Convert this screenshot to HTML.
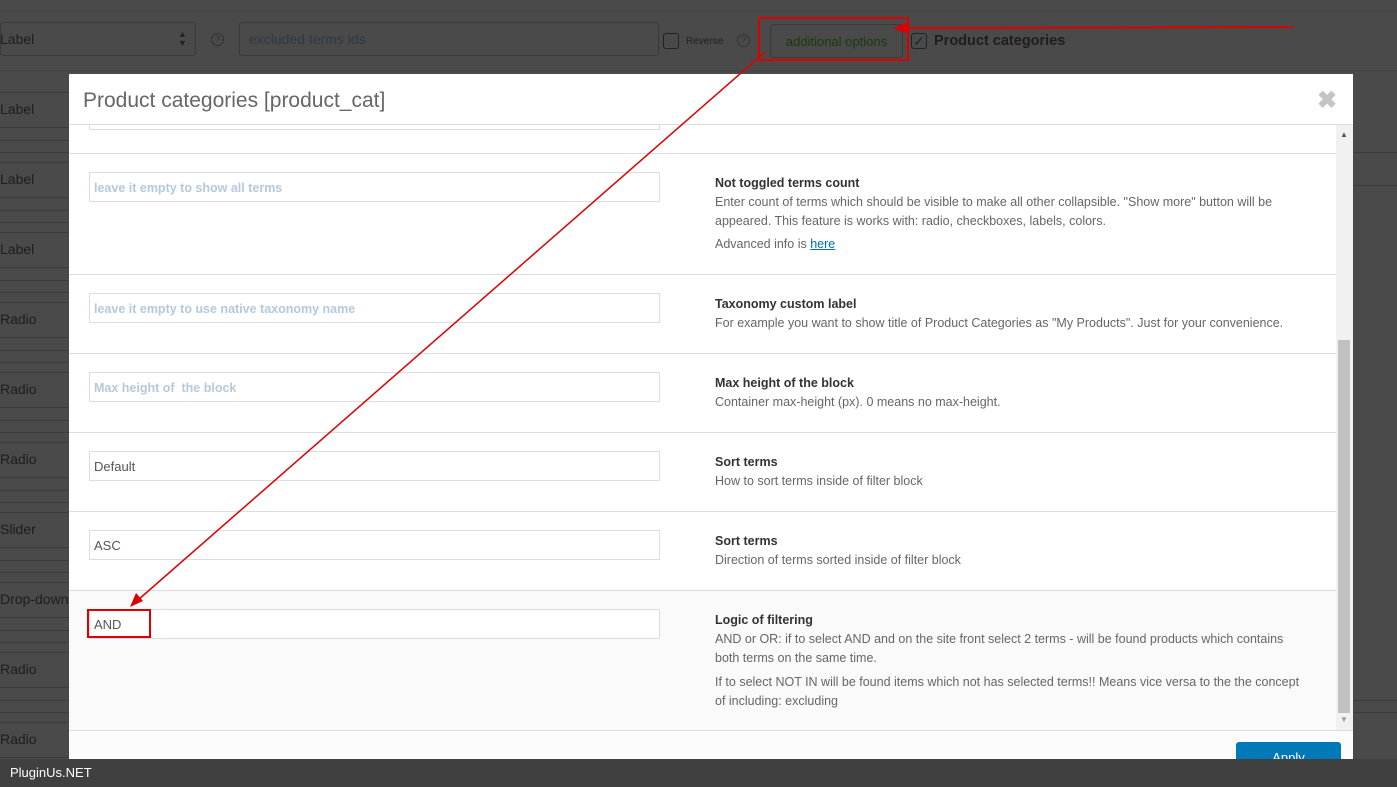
<!DOCTYPE html>
<html><head><meta charset="utf-8"><style>
*{box-sizing:border-box;margin:0;padding:0}
html,body{width:1397px;height:787px;overflow:hidden}
body{font-family:"Liberation Sans",sans-serif;position:relative;background:rgb(74,74,74)}
.abs{position:absolute}
.bgl{position:absolute;left:0;width:69px;height:1px;background:#3c3c3c}
.bgt{position:absolute;left:0;font-size:14px;color:#1e1e1e}
.modal{position:absolute;left:69px;top:74px;width:1284px;height:685px;background:#fff}
.hd{position:absolute;left:0;top:0;width:1284px;height:51px;border-bottom:1px solid #ddd}
.hd h1{position:absolute;left:14px;top:15px;font-weight:normal;font-size:21px;color:#666;white-space:nowrap}
.row{position:absolute;left:0;width:1267px;border-bottom:1px solid #ddd}
.inp{position:absolute;left:20px;width:571px;height:30px;border:1px solid #ddd;background:#fff;font-size:13px;color:#555;padding:7px 4px}
.ph{color:#b5c9de;font-weight:bold;font-size:12.5px}
.ds{position:absolute;left:646px;width:595px;font-size:12.5px;color:#666;line-height:19px}
.ds b{color:#333;font-size:12.5px;display:block}
.ds a{color:#0073aa}
</style></head><body>
<div class="abs" style="left:0;top:0;width:1397px;height:760px;background:rgb(74,74,74)"></div>
<div class="abs" style="left:0;top:11px;width:1397px;height:1px;background:#444"></div>
<div class="abs" style="left:0;top:70px;width:1397px;height:1px;background:#444"></div>
<div class="abs" style="left:0;top:22px;width:196px;height:34px;border:1px solid #3a3a3a;border-radius:3px"></div>
<div class="bgt" style="top:31px">Label</div>
<div class="abs" style="left:178px;top:30px;color:#222;font-size:9px;line-height:9px">▲<br>▼</div>
<div class="abs" style="left:211px;top:33px;width:13px;height:13px;border:1px solid #333;border-radius:50%;font-size:9px;color:#333;text-align:center;line-height:11px">?</div>
<div class="abs" style="left:239px;top:22px;width:420px;height:34px;border:1px solid #3a3a3a;border-radius:3px;color:#2e3a46;font-size:14px;padding:8px 9px">excluded terms ids</div>
<div class="abs" style="left:663px;top:33px;width:16px;height:16px;border:1px solid #222;border-radius:3px"></div>
<div class="abs" style="left:686px;top:36px;font-size:10px;color:#222">Reverse</div>
<div class="abs" style="left:737px;top:34px;width:13px;height:13px;border:1px solid #333;border-radius:50%;font-size:9px;color:#333;text-align:center;line-height:11px">?</div>
<div class="abs" style="left:770px;top:24px;width:133px;height:34px;border:1px solid #3a3a3a;border-radius:3px;color:#1b3a0c;font-size:13px;padding:9px 0;text-align:center;white-space:nowrap">additional options</div>
<div class="abs" style="left:911px;top:33px;width:16px;height:16px;border:1px solid #222;border-radius:3px;color:#0e2a40;font-size:14px;line-height:14px;text-align:center">✓</div>
<div class="abs" style="left:934px;top:33px;font-size:14.5px;color:#1e1e1e;font-weight:bold;white-space:nowrap">Product categories</div>

<div class="bgt" style="top:101px">Label</div>
<div class="bgt" style="top:171px">Label</div>
<div class="bgt" style="top:241px">Label</div>
<div class="bgt" style="top:311px">Radio</div>
<div class="bgt" style="top:381px">Radio</div>
<div class="bgt" style="top:451px">Radio</div>
<div class="bgt" style="top:521px">Slider</div>
<div class="bgt" style="top:591px">Drop-down</div>
<div class="bgt" style="top:661px">Radio</div>
<div class="bgt" style="top:731px">Radio</div>
<div class="bgl" style="top:92px"></div><div class="bgl" style="top:127px"></div><div class="bgl" style="top:140px"></div><div class="bgl" style="top:152px"></div>
<div class="bgl" style="top:162px"></div><div class="bgl" style="top:197px"></div><div class="bgl" style="top:210px"></div><div class="bgl" style="top:222px"></div>
<div class="bgl" style="top:232px"></div><div class="bgl" style="top:267px"></div><div class="bgl" style="top:280px"></div><div class="bgl" style="top:292px"></div>
<div class="bgl" style="top:302px"></div><div class="bgl" style="top:337px"></div><div class="bgl" style="top:350px"></div><div class="bgl" style="top:362px"></div>
<div class="bgl" style="top:372px"></div><div class="bgl" style="top:407px"></div><div class="bgl" style="top:420px"></div><div class="bgl" style="top:432px"></div>
<div class="bgl" style="top:442px"></div><div class="bgl" style="top:477px"></div><div class="bgl" style="top:490px"></div><div class="bgl" style="top:502px"></div>
<div class="bgl" style="top:512px"></div><div class="bgl" style="top:547px"></div><div class="bgl" style="top:560px"></div><div class="bgl" style="top:572px"></div>
<div class="bgl" style="top:582px"></div><div class="bgl" style="top:617px"></div><div class="bgl" style="top:630px"></div><div class="bgl" style="top:642px"></div>
<div class="bgl" style="top:652px"></div><div class="bgl" style="top:687px"></div><div class="bgl" style="top:700px"></div><div class="bgl" style="top:712px"></div>
<div class="bgl" style="top:722px"></div><div class="bgl" style="top:757px"></div>
<div class="abs" style="left:1353px;top:152px;width:44px;height:1px;background:#3c3c3c"></div>
<div class="abs" style="left:1353px;top:185px;width:44px;height:1px;background:#3c3c3c"></div>
<div class="abs" style="left:1353px;top:700px;width:44px;height:1px;background:#3c3c3c"></div>
<div class="abs" style="left:1353px;top:712px;width:44px;height:1px;background:#3c3c3c"></div>

<div class="modal">
 <div class="hd"><h1>Product categories [product_cat]</h1>
  <div class="abs" style="left:1248px;top:12px;font-size:24px;color:#c4c4c4;font-weight:bold">✖</div></div>
 <div class="row" style="top:51px;height:29px"><div class="abs" style="left:20px;top:0;width:571px;height:5px;border:1px solid #ddd;border-top:none"></div></div>
 <div class="row" style="top:80px;height:121px">
  <div class="inp" style="top:18px"><span class="ph">leave it empty to show all terms</span></div>
  <div class="ds" style="top:20px"><b>Not toggled terms count</b>Enter count of terms which should be visible to make all other collapsible. "Show more" button will be appeared. This feature is works with: radio, checkboxes, labels, colors.<div style="margin-top:4px">Advanced info is <a><u>here</u></a></div></div>
 </div>
 <div class="row" style="top:201px;height:79px">
  <div class="inp" style="top:18px"><span class="ph">leave it empty to use native taxonomy name</span></div>
  <div class="ds" style="top:20px"><b>Taxonomy custom label</b>For example you want to show title of Product Categories as "My Products". Just for your convenience.</div>
 </div>
 <div class="row" style="top:280px;height:79px">
  <div class="inp" style="top:18px"><span class="ph">Max height of &nbsp;the block</span></div>
  <div class="ds" style="top:20px"><b>Max height of the block</b>Container max-height (px). 0 means no max-height.</div>
 </div>
 <div class="row" style="top:359px;height:79px">
  <div class="inp" style="top:18px">Default</div>
  <div class="ds" style="top:20px"><b>Sort terms</b>How to sort terms inside of filter block</div>
 </div>
 <div class="row" style="top:438px;height:79px">
  <div class="inp" style="top:18px">ASC</div>
  <div class="ds" style="top:20px"><b>Sort terms</b>Direction of terms sorted inside of filter block</div>
 </div>
 <div class="row" style="top:517px;height:140px;background:#fafafa">
  <div class="inp" style="top:18px">AND</div>
  <div class="abs" style="left:18px;top:18px;width:64px;height:29px;border:2px solid #d00"></div>
  <div class="ds" style="top:20px"><b>Logic of filtering</b>AND or OR: if to select AND and on the site front select 2 terms - will be found products which contains both terms on the same time.<div style="margin-top:5px">If to select NOT IN will be found items which not has selected terms!! Means vice versa to the the concept of including: excluding</div></div>
 </div>
 <div class="abs" style="left:1267px;top:51px;width:17px;height:605px;background:#f1f1f1">
  <div class="abs" style="left:4px;top:5px;font-size:8px;color:#555">▲</div>
  <div class="abs" style="left:2px;top:215px;width:12px;height:373px;background:#c1c1c1"></div>
  <div class="abs" style="left:4px;top:590px;font-size:8px;color:#999">▼</div>
 </div>
 <div class="abs" style="left:0;top:656px;width:1284px;height:29px;background:#fcfcfc;border-top:1px solid #ddd">
  <div class="abs" style="left:1167px;top:11px;width:105px;height:20px;background:#0079b9;border-radius:3px;color:#fff;font-size:13px;text-align:center;padding-top:8px">Apply</div>
 </div>
</div>
<div class="abs" style="left:0;top:759px;width:1397px;height:28px;background:#404040;color:#fff;font-size:13px;padding:6px 10px">PluginUs.NET</div>
<svg class="abs" style="left:0;top:0" width="1397" height="787">
 <rect x="759" y="18" width="149" height="42" fill="none" stroke="#d00" stroke-width="2"/>
 <line x1="1293" y1="27" x2="905" y2="28" stroke="#d00" stroke-width="2"/>
 <polygon points="893,28 908,22 908,34" fill="#d00"/>
 <line x1="765" y1="52" x2="138" y2="600" stroke="#d00" stroke-width="1.5"/>
 <polygon points="130,607 136,593 143,601" fill="#d00"/>
</svg>
</body></html>
